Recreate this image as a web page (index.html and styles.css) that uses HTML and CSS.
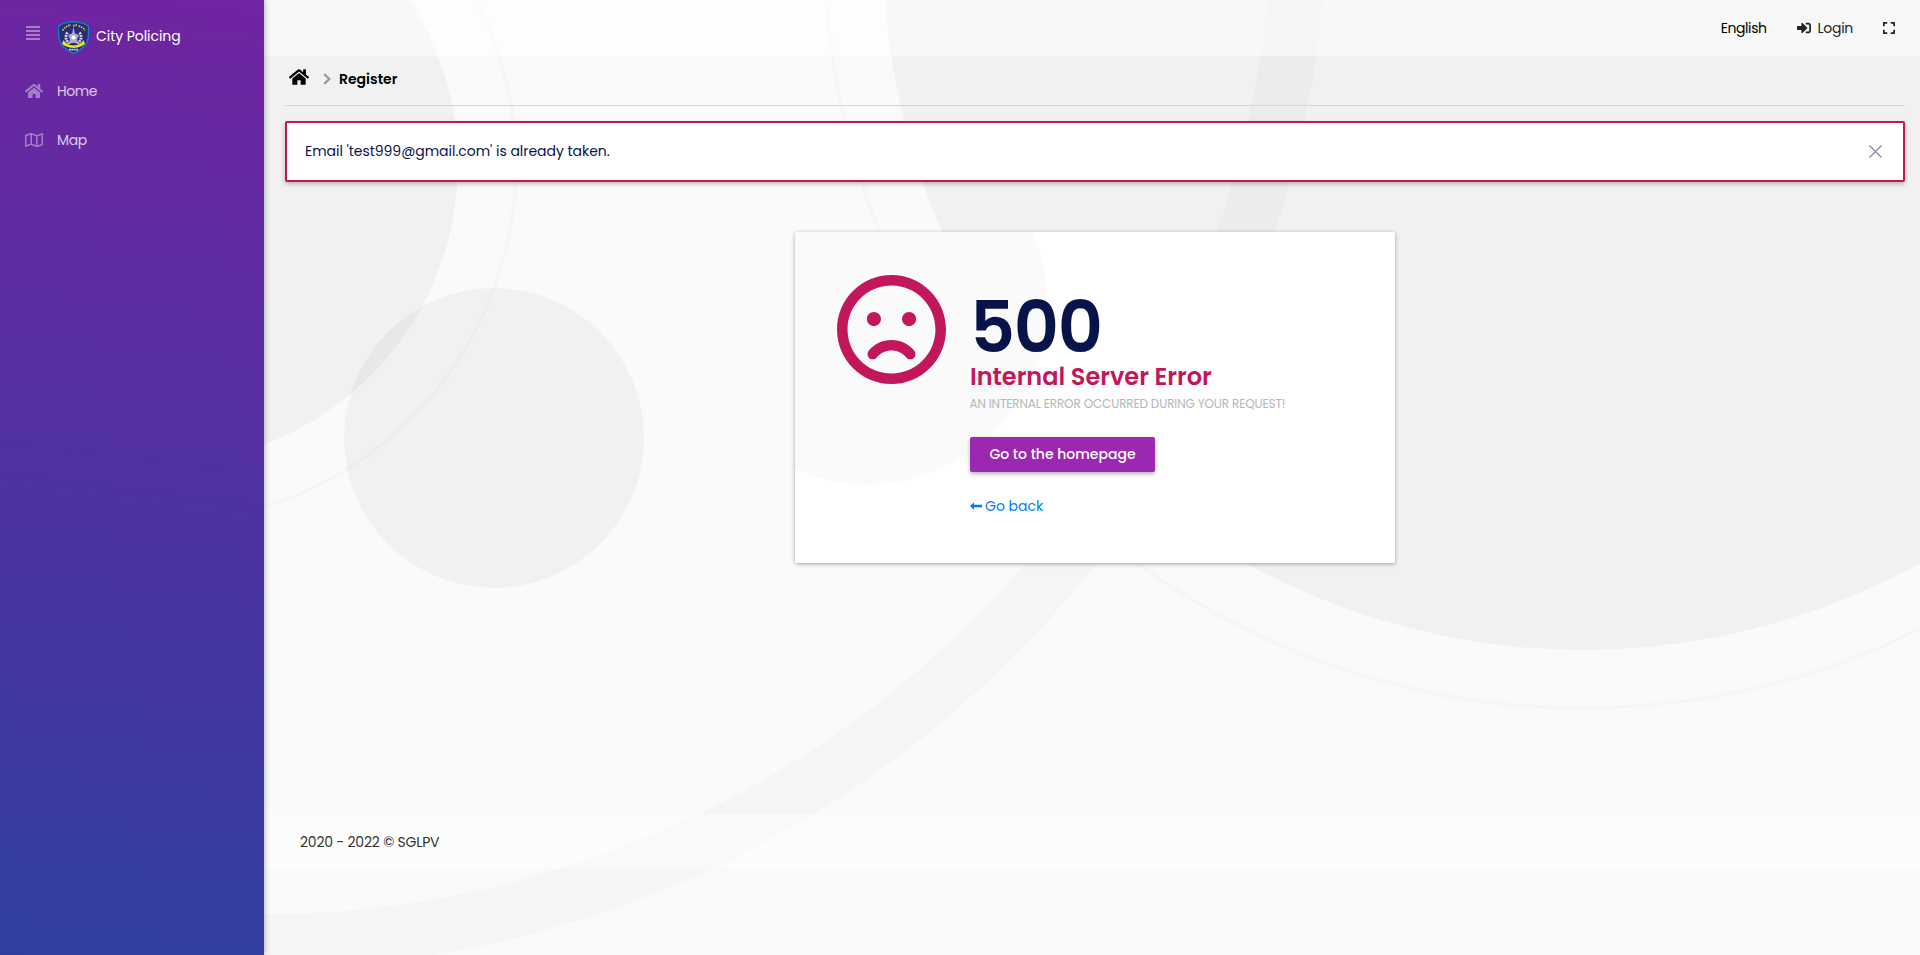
FILE: index.html
```html
<!DOCTYPE html>
<html lang="en">
<head>
<meta charset="utf-8">
<title>City Policing</title>
<link rel="stylesheet" href="styles.css">
</head>
<body>
<aside class="sidebar">
  <div class="brand">
    <svg class="burger" viewBox="0 0 14 14"><path d="M0 1h14M0 5h14M0 9h14M0 13h14" stroke="currentColor" stroke-width="2"/></svg>
    <svg class="badge" viewBox="0 0 31 33">
      <path d="M15.500.6C20 .8 26 2.200 30.400 5v9c0 9-7 15.500-14.900 18.400C7.600 29.500.6 23 .6 14V5C5 2.200 11 .8 15.500.6z" fill="#2b2a72" stroke="#0b84d8" stroke-width="1.300"/>
      <path d="M4.500 9.500Q8 4.500 13 4M15 4.800l4-.9M20.500 5Q25 6 27 9.500" fill="none" stroke="#c9c23a" stroke-width="1.900" stroke-dasharray="1.600 .9"/>
      <path d="M9.500 11.500q-4 6 2 11M21.500 11.500q4 6-2 11" fill="none" stroke="#cfd2e6" stroke-width="2.800" stroke-dasharray="2 .7"/>
      <path d="M15.500 5.500l1.300 6.700 4.200 2-2 4 1 4.500-4.500-1-4.500 1 1-4.500-2-4 4.200-2z" fill="#a9afd2"/>
      <circle cx="15.500" cy="16.500" r="2" fill="#fff"/>
      <path d="M5.500 19q2.500 5 10 5.500 7.500-.5 10-5.500l1.500 3.800q-3 3.500-11.500 4.200-8.500-.7-11.500-4.200z" fill="#efe51f"/>
      <path d="M11 28.700h9" stroke="#d7daf0" stroke-width="1.800" stroke-dasharray="1.700 .7"/>
    </svg>
    <span class="brand-name">City Policing</span>
  </div>
  <nav class="menu">
    <a class="item"><svg viewBox="0 0 576 512"><use href="#i-home"/></svg><span>Home</span></a>
    <a class="item"><svg viewBox="0 0 576 512"><path d="M560.020 32c-1.960 0-3.980.37-5.960 1.160L384.010 96H384L212 35.280A64.252 64.252 0 0 0 191.760 32c-6.690 0-13.370 1.050-19.810 3.140L20.120 87.950A32.006 32.006 0 0 0 0 117.660v346.320C0 473.170 7.530 480 15.990 480c1.960 0 3.970-.37 5.960-1.160L192 416l172 60.710a63.980 63.980 0 0 0 40.050.15l151.830-52.810A31.996 31.996 0 0 0 576 394.340V48.020c0-9.190-7.530-16.020-15.980-16.020zM224 90.420l128 45.190v285.970l-128-45.190V90.420zM48 418.050V129.070l128-44.530v286.200l-.64.23L48 418.050zm480-35.130l-128 44.530V141.260l.64-.24L528 93.950v288.970z"/></svg><span>Map</span></a>
  </nav>
</aside>
<main class="main">
  <svg class="backdrop" viewBox="264 0 1656 955">
    <circle class="disc" cx="158" cy="164" r="300"/>
    <circle class="thin" cx="158" cy="165" r="358"/>
    <circle class="disc" cx="494" cy="438" r="150"/>
    <circle class="disc" cx="1583" cy="-50" r="700"/>
    <circle class="thin" cx="1583" cy="-50" r="758"/>
    <circle class="band" cx="258" cy="-100" r="1042"/>
  </svg>
  <header class="topbar">
    <span class="lang">English</span>
    <a class="login"><svg viewBox="0 0 512 512"><path d="M416 448h-84c-6.600 0-12-5.400-12-12v-40c0-6.600 5.400-12 12-12h84c17.700 0 32-14.300 32-32V160c0-17.700-14.300-32-32-32h-84c-6.600 0-12-5.400-12-12V76c0-6.600 5.400-12 12-12h84c53 0 96 43 96 96v192c0 53-43 96-96 96zm-47-209L201 71c-15-15-41-4.500-41 17v96H24c-13.300 0-24 10.700-24 24v96c0 13.300 10.700 24 24 24h136v96c0 21.500 26 32 41 17l168-168c9.300-9.400 9.300-24.600 0-34z"/></svg><span>Login</span></a>
    <svg class="full" viewBox="0 0 448 512"><path d="M0 180V56c0-13.300 10.700-24 24-24h124c6.600 0 12 5.400 12 12v40c0 6.600-5.400 12-12 12H64v84c0 6.600-5.400 12-12 12H12c-6.600 0-12-5.400-12-12zM288 44v40c0 6.600 5.400 12 12 12h84v84c0 6.600 5.400 12 12 12h40c6.600 0 12-5.400 12-12V56c0-13.300-10.700-24-24-24H300c-6.600 0-12 5.400-12 12zm148 276h-40c-6.600 0-12 5.400-12 12v84h-84c-6.600 0-12 5.400-12 12v40c0 6.600 5.400 12 12 12h124c13.300 0 24-10.700 24-24V332c0-6.600-5.400-12-12-12zM160 468v-40c0-6.600-5.400-12-12-12H64v-84c0-6.600-5.400-12-12-12H12c-6.600 0-12 5.400-12 12v124c0 13.300 10.700 24 24 24h124c6.600 0 12-5.400 12-12z"/></svg>
  </header>
  <section class="content">
    <div class="crumbs">
      <svg class="crumb-home" viewBox="0 0 576 512"><path id="i-home" d="M280.370 148.260L96 300.110V464a16 16 0 0 0 16 16l112.060-.29a16 16 0 0 0 15.920-16V368a16 16 0 0 1 16-16h64a16 16 0 0 1 16 16v95.640a16 16 0 0 0 16 16.050L464 480a16 16 0 0 0 16-16V300L295.670 148.260a12.190 12.190 0 0 0-15.300 0zM571.600 251.470L488 182.560V44.050a12 12 0 0 0-12-12h-56a12 12 0 0 0-12 12v72.610L318.470 43a48 48 0 0 0-61 0L4.340 251.470a12 12 0 0 0-1.600 16.900l25.500 31A12 12 0 0 0 45.150 301l235.220-193.740a12.190 12.190 0 0 1 15.300 0L530.900 301a12 12 0 0 0 16.900-1.600l25.500-31a12 12 0 0 0-1.700-16.930z"/></svg>
      <svg class="crumb-sep" viewBox="0 0 8 12"><path d="M1.200 1l5 5-5 5" fill="none" stroke="#999" stroke-width="2.400"/></svg>
      <strong>Register</strong>
    </div>
    <div class="alert">
      <span>Email 'test999@gmail.com' is already taken.</span>
      <svg viewBox="0 0 13 13"><path d="M.5.5l12 12M12.500.5l-12 12" stroke="#8084aa" stroke-width="1.100"/></svg>
    </div>
    <div class="card">
      <svg class="frown" viewBox="0 0 496 496"><path transform="translate(0 -8)" d="M248 8C111 8 0 119 0 256s111 248 248 248 248-111 248-248S385 8 248 8zm0 448c-110.300 0-200-89.700-200-200S137.700 56 248 56s200 89.700 200 200-89.700 200-200 200zm-80-216c17.700 0 32-14.300 32-32s-14.300-32-32-32-32 14.300-32 32 14.300 32 32 32zm160-64c-17.700 0-32 14.300-32 32s14.300 32 32 32 32-14.300 32-32-14.300-32-32-32zm-80 128c-40.200 0-78 17.700-103.800 48.600-8.500 10.200-7.100 25.300 3.100 33.800 10.200 8.400 25.300 7.100 33.800-3.100 16.600-19.900 41-31.400 66.900-31.400s50.300 11.400 66.900 31.400c8.100 9.700 23.100 11.900 33.800 3.100 10.200-8.500 11.500-23.600 3.100-33.800C326 321.700 288.200 304 248 304z"/></svg>
      <div class="message">
        <h1>500</h1>
        <h2>Internal Server Error</h2>
        <p>AN INTERNAL ERROR OCCURRED DURING YOUR REQUEST!</p>
        <a class="button">Go to the homepage</a>
        <a class="back"><svg viewBox="0 0 12 8"><path d="M0 4l4-3.800v2.600h8v2.400H4v2.600z"/></svg><span>Go back</span></a>
      </div>
    </div>
  </section>
  <footer class="footer"><span>2020 - 2022 © SGLPV</span></footer>
</main>
</body>
</html>
```

FILE: styles.css
```css
* { box-sizing: border-box; }
body {
  margin: 0;
  height: 955px;
  display: grid;
  grid-template-columns: 264px 1fr;
  font: 14px/20px Poppins, Inter, "Open Sans", sans-serif;
  color: #212529;
  background: #fafafa;
  overflow: hidden;
}
h1, h2, p { margin: 0; }
svg { display: block; fill: currentColor; flex: none; }

.sidebar {
  position: relative;
  z-index: 1;
  background: linear-gradient(187deg, #7024a1, #2f3f9f);
  box-shadow: 0 0 6px rgba(0, 0, 0, .35);
  color: #fff;
}
.brand { display: flex; height: 71px; padding: 21px 0 0 26px; }
.burger { width: 14px; height: 14px; margin: 5px 18px 0 0; opacity: .4; }
.badge { width: 31px; height: 33px; margin-right: 7px; }
.brand-name { margin-top: 5px; letter-spacing: -.05px; }
.menu { display: flex; flex-direction: column; }
.item { display: flex; align-items: center; height: 49px; padding: 0 0 10px 25px; gap: 14px; }
.item svg { width: 18px; height: 16px; opacity: .4; }
.item span { opacity: .75; letter-spacing: -.4px; }

.main { position: relative; display: flex; flex-direction: column; }
.backdrop { position: absolute; inset: 0; width: 1656px; height: 955px; fill: none; }
.disc { fill: rgba(0, 0, 0, .035); }
.thin { stroke: rgba(0, 0, 0, .016); stroke-width: 4; }
.band { stroke: rgba(0, 0, 0, .02); stroke-width: 55; }

.topbar {
  position: relative;
  display: flex;
  justify-content: flex-end;
  align-items: center;
  height: 56px;
  padding-right: 25px;
  background: rgba(255, 255, 255, .5);
}
.lang { color: #000; margin-right: 30px; letter-spacing: -.4px; }
.login { display: flex; align-items: center; gap: 7px; margin-right: 30px; letter-spacing: -.3px; }
.login svg { width: 14px; height: 14px; }
.full { width: 12px; height: 14px; }

.content { position: relative; height: 758px; padding: 0 15px 0 21px; }
.crumbs {
  display: flex;
  align-items: center;
  height: 50px;
  padding: 0 0 4px 4px;
  border-bottom: 1px solid #d6d6d6;
  color: #000;
}
.crumb-home { width: 20px; height: 18px; margin-bottom: 3px; }
.crumb-sep { width: 8px; height: 12px; margin: 0 8px 0 14px; }
.crumbs strong { font-weight: 600; }
.alert {
  display: flex;
  align-items: center;
  justify-content: space-between;
  height: 61px;
  margin-top: 15px;
  padding: 0 21px 2px 18px;
  border: 2px solid #c2185b;
  border-radius: 2px;
  background: #fff;
  color: #08134a;
  letter-spacing: -.03px;
  box-shadow: 0 2px 4px rgba(0, 0, 0, .25);
}
.alert svg { width: 13px; height: 13px; margin-top: 1px; }

.card {
  position: relative;
  display: flex;
  width: 600px;
  height: 331px;
  margin: 50px auto 0;
  padding: 43px 42px;
  border-radius: 2px;
  background: radial-gradient(circle at 72px 72px, #fafafa 179.500px, #fff 180.500px);
  box-shadow: 0 1px 4px rgba(0, 0, 0, .35);
}
.frown { width: 109px; height: 109px; color: #c2185b; }
.message { display: flex; flex-direction: column; align-items: flex-start; margin-left: 24px; }
.message h1 { margin: 18px 0 0; font-size: 70px; line-height: 70px; font-weight: 600; color: #08134a; letter-spacing: -1.300px; }
.message h2 { font-size: 24px; line-height: 28px; font-weight: 600; color: #c2185b; }
.message p { margin: 5px 0 0 -.5px; font-size: 12px; line-height: 16px; color: #b4b7ba; white-space: nowrap; letter-spacing: -.14px; }
.button {
  margin-top: 25px;
  width: 185px;
  line-height: 35px;
  text-align: center;
  border-radius: 2px;
  background: #9c27b0;
  color: #fff;
  font-weight: 500;
  box-shadow: 0 2px 4px rgba(0, 0, 0, .3);
}
.back { display: flex; align-items: center; gap: 3px; margin-top: 24px; color: #007bff; }
.back svg { width: 12px; height: 8px; }

.footer {
  position: relative;
  height: 54px;
  padding: 18px 36px;
  background: rgba(255, 255, 255, .4);
  color: #333;
  letter-spacing: -.2px;
}
```
